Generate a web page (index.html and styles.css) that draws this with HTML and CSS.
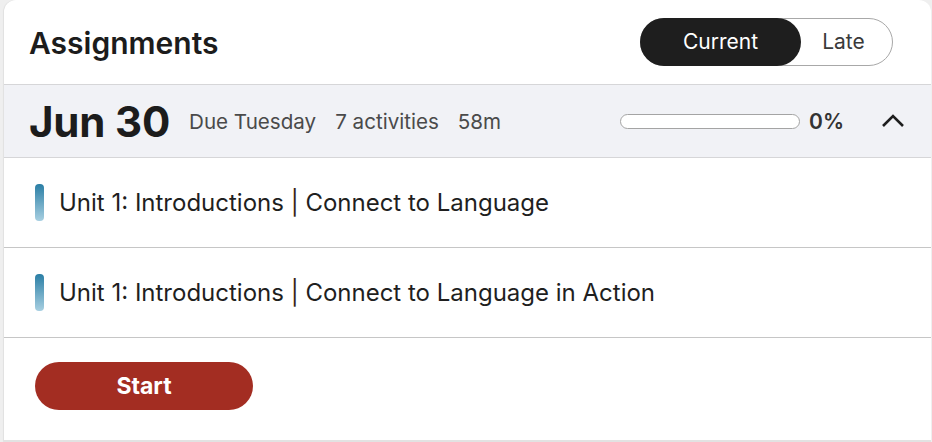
FILE: index.html
```html
<!DOCTYPE html>
<html lang="en">

<head>
    <meta charset="UTF-8">
    <meta name="viewport" content="width=device-width, initial-scale=1.0">
    <title>Assignments</title>
    <link rel="stylesheet" href="styles.css">
</head>

<body>
    <div class="card">
        <div class="card-header">
            <h2>Assignments</h2>
            <div class="toggle">
                <button class="toggle-btn active">Current</button>
                <button class="toggle-btn">Late</button>
            </div>
        </div>

        <div class="due-row">
            <div class="due-date">Jun 30</div>
            <div class="meta">Due Tuesday</div>
            <div class="meta">7 activities</div>
            <div class="meta">58m</div>
            <div class="progress">
                <div class="progress-bar"></div>
                <div class="progress-value">0%</div>
            </div>
            <svg class="chevron" width="24" height="14" viewBox="0 0 24 14">
                <path d="M2 12 L12 2 L22 12" fill="none" stroke="#1e1e1e" stroke-width="2.6" />
            </svg>
        </div>

        <div class="activity">
            <span class="activity-marker"></span>
            <span class="activity-title">Unit 1: Introductions <span class="sep">|</span> Connect to Language</span>
        </div>
        <div class="activity">
            <span class="activity-marker"></span>
            <span class="activity-title">Unit 1: Introductions <span class="sep">|</span> Connect to Language in Action</span>
        </div>

        <div class="card-footer">
            <button class="start-btn">Start</button>
        </div>
    </div>
</body>

</html>
```

FILE: styles.css
```css
* {
    margin: 0;
    padding: 0;
    box-sizing: border-box;
}

body {
    font-family: 'Inter', 'Noto Sans', sans-serif;
    background: #efefef;
    padding: 0 1px 0 4px;
    color: #1c1c1c;
}

.card {
    background: #fff;
    border-radius: 12px 12px 0 0;
    box-shadow: -1px 0 1px rgba(0, 0, 0, 0.06);
    border-bottom: 2px solid #e2e2e2;
}

.card-header {
    height: 85px;
    display: flex;
    align-items: center;
    justify-content: space-between;
    padding: 0 38px 0 25px;
    border-bottom: 1px solid #d6d6d8;
}

.card-header h2 {
    font-size: 30px;
    font-weight: 600;
    margin-top: 1px;
}

.toggle {
    display: flex;
    width: 253px;
    height: 48px;
    border: 1px solid #a8a8a8;
    border-radius: 24px;
    margin-top: -1px;
}

.toggle-btn {
    flex: 1;
    font-family: inherit;
    font-size: 21px;
    background: none;
    border: none;
    color: #3a3a3a;
    padding: 0 6px 0 0;
    border-radius: 24px;
    cursor: pointer;
}

.toggle-btn.active {
    flex: none;
    background: #1e1e1e;
    color: #fff;
    width: 161px;
    margin: -1px 0 -1px -1px;
    padding: 0;
}

.due-row {
    height: 73px;
    display: flex;
    align-items: center;
    gap: 19px;
    padding: 0 26px 0 25px;
    background: #f1f2f6;
    border-bottom: 1px solid #d6d6d8;
}

.due-date {
    font-size: 42px;
    font-weight: 700;
    letter-spacing: -0.2px;
}

.meta {
    font-size: 20.6px;
    color: #4a4a4a;
}

.progress {
    margin-left: auto;
    display: flex;
    align-items: center;
    gap: 9px;
}

.progress-bar {
    width: 180px;
    height: 15px;
    background: #fff;
    border: 1px solid #a4a4a4;
    border-radius: 8px;
}

.progress-value {
    font-size: 21px;
    font-weight: 600;
    color: #333;
}

.chevron {
    margin-left: 18px;
}

.activity {
    height: 90px;
    display: flex;
    align-items: center;
    gap: 15px;
    padding-left: 31px;
    border-bottom: 1px solid #c6c6c6;
}

.activity-marker {
    width: 9px;
    height: 37px;
    border-radius: 4px;
    background: linear-gradient(180deg, #2a7ea5 0%, #a7cfe1 100%);
}

.activity-title {
    font-size: 24px;
    color: #1f1f1f;
}

.sep {
    color: #3a2418;
}

.card-footer {
    height: 102px;
    padding: 24px 0 0 31px;
}

.start-btn {
    font-family: inherit;
    width: 218px;
    height: 48px;
    border: none;
    border-radius: 24px;
    background: #a32d22;
    color: #fff;
    font-size: 23px;
    font-weight: 700;
    cursor: pointer;
}
```
